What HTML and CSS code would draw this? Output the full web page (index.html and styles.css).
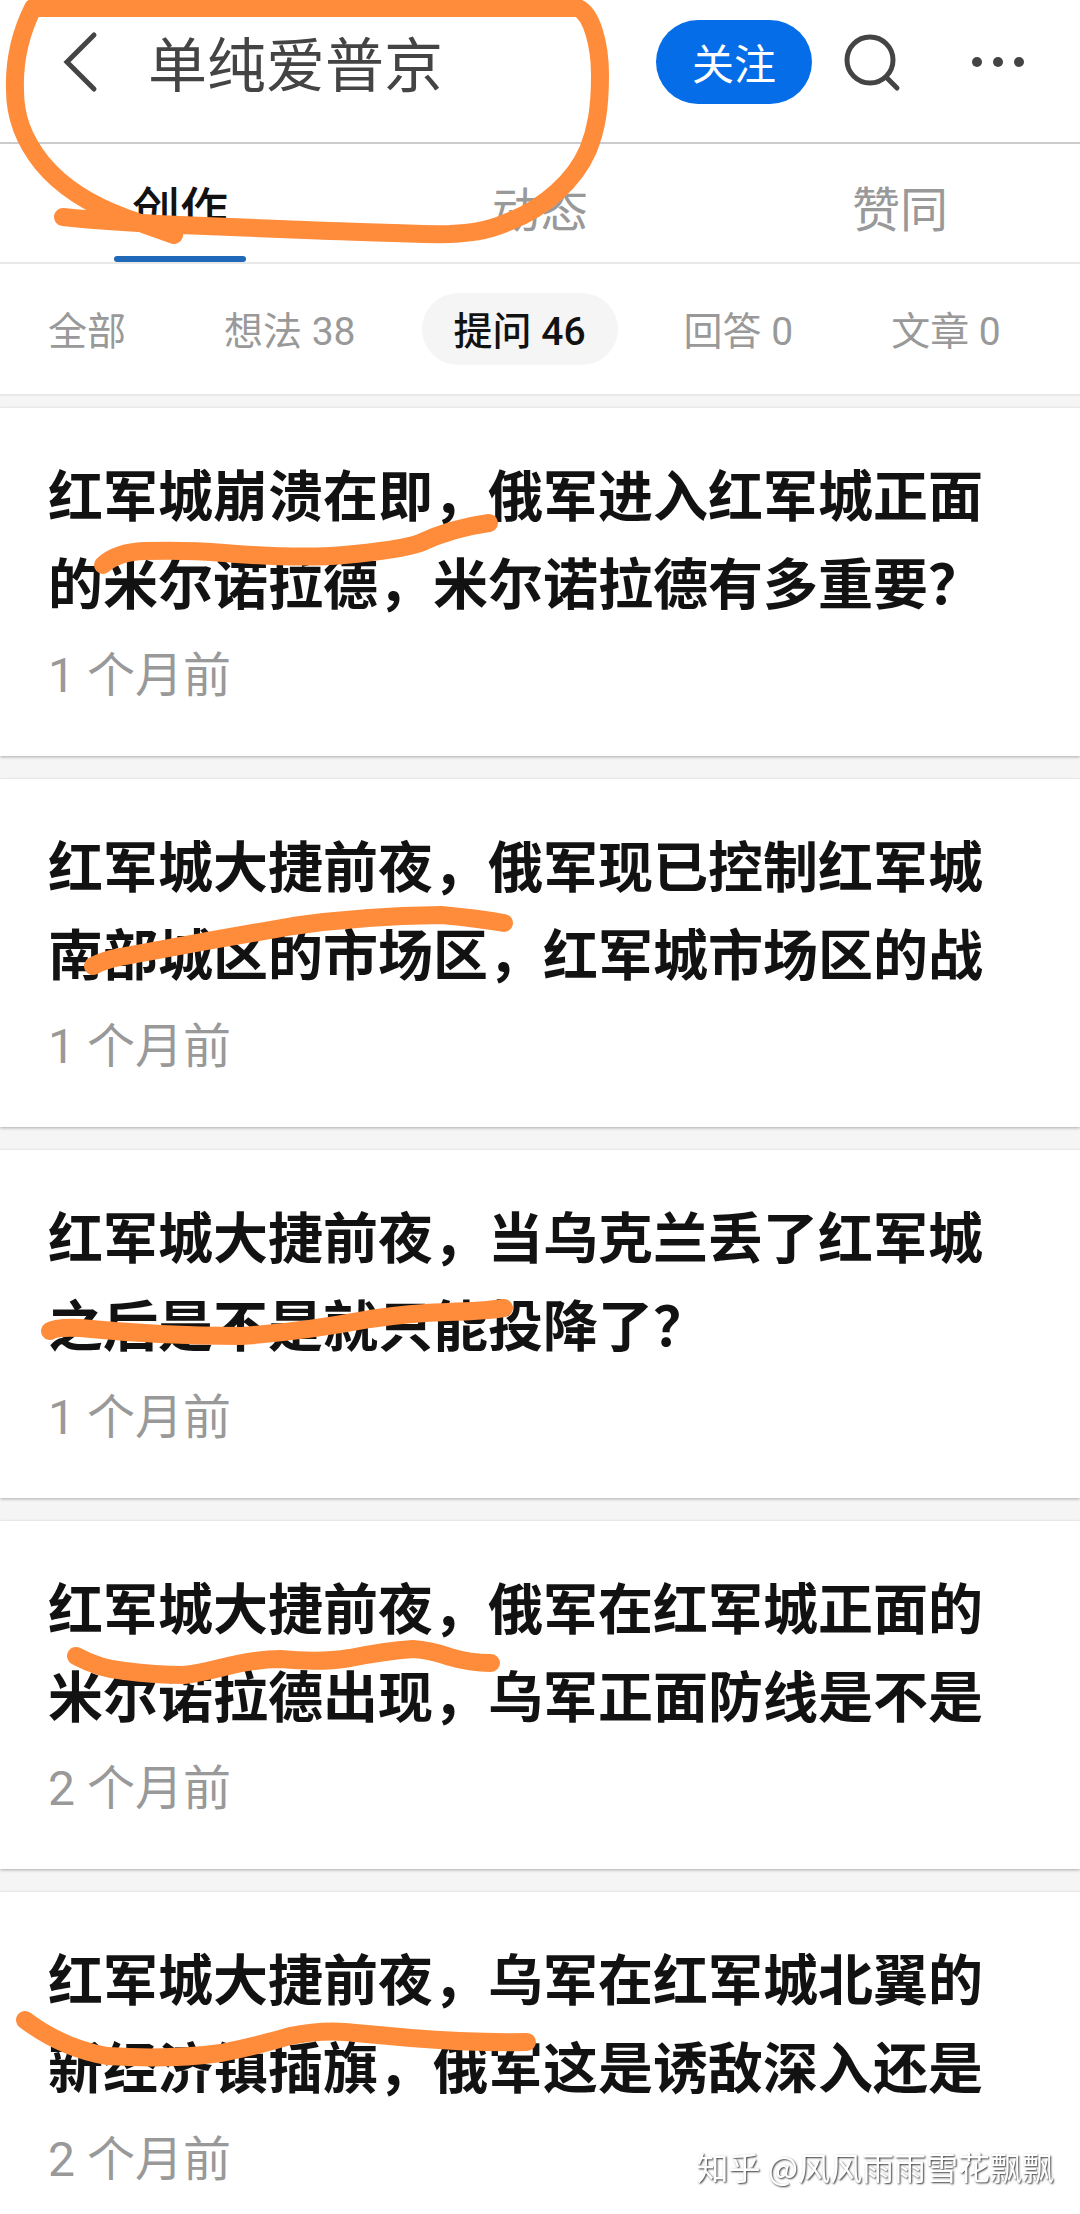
FILE: index.html
```
<!DOCTYPE html>
<html lang="zh-CN">
<head>
    <meta charset="UTF-8">
    <meta name="viewport" content="width=device-width, initial-scale=1">
    <title>单纯爱普京</title>
    <link rel="stylesheet" href="styles.css">
</head>
<body>
<div class="page">
    <header class="header">
        <button class="icon-button back" type="button" aria-label="返回">
            <svg width="40" height="64" viewBox="0 0 40 64"><path d="M34 5L7 32L34 59"/></svg>
        </button>
        <h1>单纯爱普京</h1>
        <button class="follow" type="button">关注</button>
        <button class="icon-button search" type="button" aria-label="搜索">
            <svg width="60" height="64" viewBox="0 0 60 64"><circle cx="28" cy="30" r="23"/><path d="M45 48L55 58"/></svg>
        </button>
        <button class="icon-button more" type="button" aria-label="更多">
            <svg width="56" height="20" viewBox="0 0 56 20"><circle cx="7" cy="10" r="5"/><circle cx="28" cy="10" r="5"/><circle cx="49" cy="10" r="5"/></svg>
        </button>
        <svg class="mark" width="640" height="260" viewBox="0 0 640 260">
            <path d="M174 235L126 218C85 203 60 185 42 163C22 138 15 115 15 90C14 60 21 32 33 8H578C592 14 600 45 600 75C600 110 596 130 588 150C575 180 545 208 508 222C485 232 468 233 450 234C420 235 380 232 330 231L180 225Q110 222 63 217"/>
        </svg>
    </header>

    <nav class="tabs">
        <a class="active" href="#">创作</a>
        <a href="#">动态</a>
        <a href="#">赞同</a>
    </nav>

    <div class="filters">
        <button type="button">全部</button>
        <button type="button">想法 38</button>
        <button class="active" type="button">提问 46</button>
        <button type="button">回答 0</button>
        <button type="button">文章 0</button>
    </div>

    <main class="list">
        <article class="card">
            <h2>红军城崩溃在即，俄军进入红军城正面的米尔诺拉德，米尔诺拉德有多重要？</h2>
            <p>1 个月前</p>
            <svg class="mark" width="560" height="240" viewBox="0 0 560 240">
                <path d="M103 157Q117 144 145 143Q190 142 224 145Q300 151 344 147Q400 142 420 135Q452 120 489 115"/>
            </svg>
        </article>
        <article class="card">
            <h2>红军城大捷前夜，俄军现已控制红军城南部城区的市场区，红军城市场区的战</h2>
            <p>1 个月前</p>
            <svg class="mark" width="560" height="240" viewBox="0 0 560 240">
                <path d="M93 187Q104 181 120 178L207 162L293 147Q362 137 441 136Q475 139 504 144"/>
            </svg>
        </article>
        <article class="card">
            <h2>红军城大捷前夜，当乌克兰丢了红军城之后是不是就只能投降了？</h2>
            <p>1 个月前</p>
            <svg class="mark" width="560" height="240" viewBox="0 0 560 240">
                <path d="M50 181Q56 177 80 178Q160 186 241 186Q300 182 370 169Q410 163 448 162Q485 161 504 158"/>
            </svg>
        </article>
        <article class="card">
            <h2>红军城大捷前夜，俄军在红军城正面的米尔诺拉德出现，乌军正面防线是不是</h2>
            <p>2 个月前</p>
            <svg class="mark" width="560" height="240" viewBox="0 0 560 240">
                <path d="M76 135Q100 148 125 150Q155 154 184 154Q200 152 220 147Q255 138 280 138Q320 142 350 137Q385 130 413 128Q430 129 450 136Q470 142 491 142"/>
            </svg>
        </article>
        <article class="card">
            <h2>红军城大捷前夜，乌军在红军城北翼的新经济镇插旗，俄军这是诱敌深入还是</h2>
            <p>2 个月前</p>
            <svg class="mark" width="560" height="240" viewBox="0 0 560 240">
                <path d="M25 128Q62 156 107 164Q170 168 221 161Q260 153 290 144Q320 138 345 140L411 146Q470 151 527 150"/>
            </svg>
        </article>
    </main>

    <div class="watermark">知乎 @风风雨雨雪花飘飘</div>
</div>
</body>
</html>
```

FILE: styles.css
```
* {
    box-sizing: border-box;
}
body {
    margin: 0;
    font-family: "Noto Sans CJK SC", sans-serif;
    background-color: #f5f5f5;
    color: #121212;
}
h1, h2, p {
    margin: 0;
}
button {
    padding: 0;
    border: none;
    background: none;
    font-family: inherit;
    cursor: pointer;
}
.page {
    display: flex;
    flex-direction: column;
    height: 100vh;
    overflow: hidden;
}

/* top bar */
.header {
    position: relative;
    display: flex;
    align-items: center;
    flex-shrink: 0;
    height: 144px;
    padding: 0 54px 18px 60px;
    background: #fff;
    border-bottom: 2px solid #ccc;
}
.header h1 {
    flex: 1;
    margin-left: 48px;
    font-size: 59px;
    line-height: 84px;
    font-weight: 400;
    color: #444;
}
.icon-button {
    display: flex;
}
.icon-button svg {
    fill: none;
    stroke: #444;
    stroke-width: 5;
    stroke-linecap: round;
}
.follow {
    width: 156px;
    height: 84px;
    border-radius: 42px;
    background-color: #056de8;
    color: #fff;
    font-size: 42px;
    line-height: 84px;
}
.search {
    margin-left: 30px;
}
.more {
    margin-left: 68px;
}
.more svg {
    fill: #444;
    stroke: none;
}

/* tabs */
.tabs {
    display: flex;
    flex-shrink: 0;
    height: 120px;
    background: #fff;
    border-bottom: 2px solid #e8e8e8;
}
.tabs a {
    display: flex;
    flex: 1;
    flex-direction: column;
    align-items: center;
    justify-content: flex-end;
    color: #999;
    font-size: 48px;
    line-height: 100px;
    text-decoration: none;
}
.tabs a::after {
    content: "";
    width: 132px;
    height: 6px;
    border-radius: 3px;
}
.tabs .active {
    color: #121212;
    font-weight: 500;
}
.tabs .active::after {
    background-color: #1f69b8;
}

/* filters */
.filters {
    display: flex;
    align-items: center;
    flex-shrink: 0;
    gap: 34px;
    height: 132px;
    padding: 0 16px;
    background: #fff;
    border-bottom: 2px solid #e8e8e8;
}
.filters button {
    padding: 6px 32px 0;
    border-radius: 36px;
    color: #999;
    font-family: Roboto, "Noto Sans CJK SC", sans-serif;
    font-size: 39px;
    line-height: 66px;
    white-space: nowrap;
}
.filters .active {
    background-color: #f5f5f5;
    color: #121212;
    font-weight: 500;
}

/* question list */
.list {
    display: flex;
    flex: 1;
    flex-direction: column;
    gap: 23px;
    min-height: 0;
    padding-top: 12px;
    overflow-y: auto;
    scrollbar-width: none;
}
.card {
    position: relative;
    flex-shrink: 0;
    padding: 40px 48px;
    background: #fff;
    box-shadow: 0 1px 3px rgba(0,0,0,0.3);
}
.card h2 {
    font-size: 55px;
    line-height: 88px;
    font-weight: 700;
}
.card p {
    padding: 20px 0 8px;
    color: #999;
    font-family: Roboto, "Noto Sans CJK SC", sans-serif;
    font-size: 48px;
    line-height: 64px;
}

/* orange pen strokes over the text */
.mark {
    position: absolute;
    top: 0;
    left: 0;
    z-index: 1;
    fill: none;
    stroke: #ff8c3b;
    stroke-width: 18;
    stroke-linecap: round;
    stroke-linejoin: round;
    pointer-events: none;
}

.watermark {
    position: fixed;
    right: 26px;
    bottom: 24px;
    color: #fff;
    font-size: 32px;
    line-height: 48px;
    text-shadow: 1px 1px 2px rgba(0,0,0,0.8);
}
```
